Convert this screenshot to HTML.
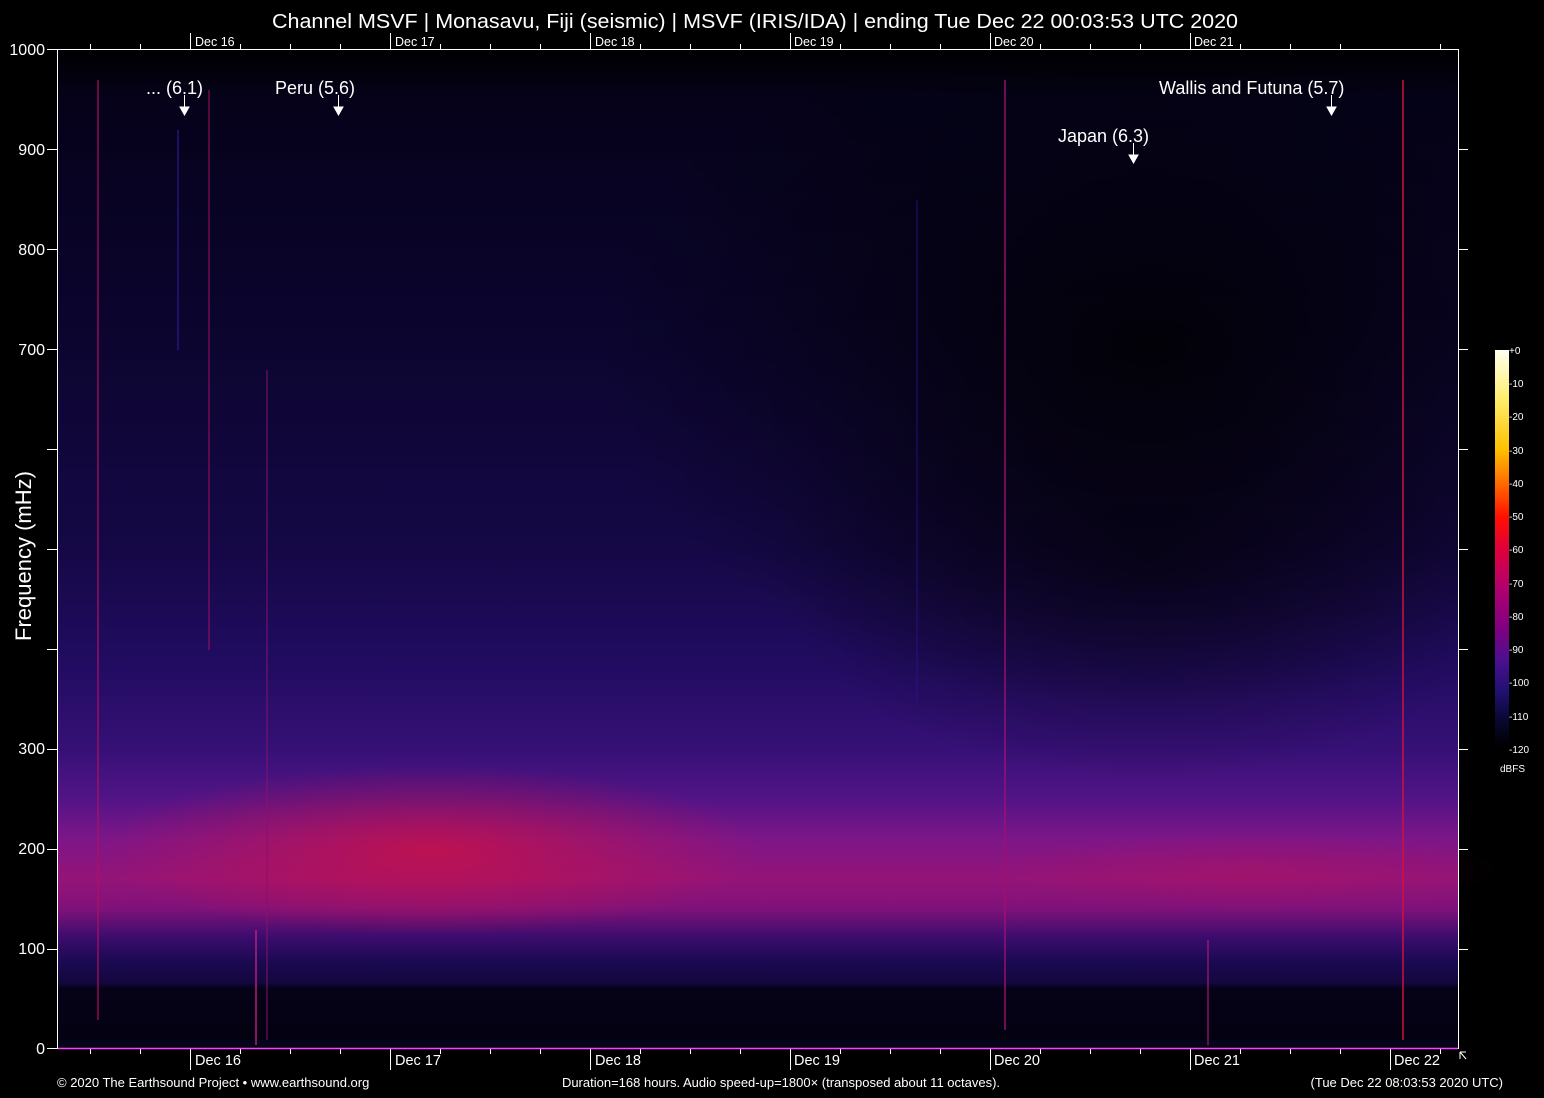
<!DOCTYPE html>
<html><head><meta charset="utf-8"><style>
html,body{margin:0;padding:0;background:#000;width:1544px;height:1098px;overflow:hidden}
text{font-family:"Liberation Sans",Arial,sans-serif;fill:#fff}
</style></head><body>
<svg width="1544" height="1098" xmlns="http://www.w3.org/2000/svg">
<defs>
<linearGradient id="v" x1="0" y1="0" x2="0" y2="1">
<stop offset="0" stop-color="#000"/>
<stop offset="0.05" stop-color="#05021a"/>
<stop offset="0.3" stop-color="#0c0530"/>
<stop offset="0.5" stop-color="#150846"/>
<stop offset="0.62" stop-color="#220c62"/>
<stop offset="0.7" stop-color="#361076"/>
<stop offset="0.75" stop-color="#521486"/>
<stop offset="0.79" stop-color="#7c1688"/>
<stop offset="0.83" stop-color="#941478"/>
<stop offset="0.86" stop-color="#80127a"/>
<stop offset="0.89" stop-color="#3a0c6c"/>
<stop offset="0.915" stop-color="#1a0950"/>
<stop offset="0.935" stop-color="#14083e"/>
<stop offset="0.94" stop-color="#060218"/>
<stop offset="1" stop-color="#030110"/>
</linearGradient>
<radialGradient id="red" cx="0.5" cy="0.5" r="0.5">
<stop offset="0" stop-color="#d01040" stop-opacity="0.75"/>
<stop offset="1" stop-color="#d01040" stop-opacity="0"/>
</radialGradient>
<radialGradient id="dark" cx="0.5" cy="0.5" r="0.5">
<stop offset="0" stop-color="#000" stop-opacity="0.85"/>
<stop offset="1" stop-color="#000" stop-opacity="0"/>
</radialGradient>
<linearGradient id="cb" x1="0" y1="0" x2="0" y2="1">
<stop offset="0" stop-color="#fffff0"/>
<stop offset="0.12" stop-color="#ffee70"/>
<stop offset="0.25" stop-color="#ffc000"/>
<stop offset="0.33" stop-color="#ff7000"/>
<stop offset="0.42" stop-color="#ff1000"/>
<stop offset="0.5" stop-color="#e0003a"/>
<stop offset="0.6" stop-color="#b00070"/>
<stop offset="0.7" stop-color="#800080"/>
<stop offset="0.78" stop-color="#4a1090"/>
<stop offset="0.86" stop-color="#201070"/>
<stop offset="0.93" stop-color="#080830"/>
<stop offset="1" stop-color="#000"/>
</linearGradient>
</defs>
<rect x="58" y="49" width="1400" height="999" fill="url(#v)"/>
<ellipse cx="1150" cy="350" rx="550" ry="360" fill="url(#dark)"/>
<ellipse cx="1150" cy="560" rx="380" ry="220" fill="url(#dark)" opacity="0.6"/>
<ellipse cx="430" cy="850" rx="330" ry="85" fill="url(#red)"/>
<ellipse cx="1250" cy="870" rx="250" ry="40" fill="url(#red)" opacity="0.3"/>
<rect x="58" y="1040" width="1400" height="8" fill="#06041a"/>
<g stroke-width="2">
<line x1="98" y1="80" x2="98" y2="1020" stroke="#b01060" opacity="0.6"/>
<line x1="209" y1="90" x2="209" y2="650" stroke="#a01060" opacity="0.5"/>
<line x1="178" y1="130" x2="178" y2="350" stroke="#3020a0" opacity="0.5"/>
<line x1="267" y1="370" x2="267" y2="1040" stroke="#8a1070" opacity="0.5"/>
<line x1="1005" y1="80" x2="1005" y2="1030" stroke="#a01070" opacity="0.7"/>
<line x1="1403" y1="80" x2="1403" y2="1040" stroke="#d01040" opacity="0.75"/>
<line x1="256" y1="930" x2="256" y2="1045" stroke="#c02080" opacity="0.7"/>
<line x1="1208" y1="940" x2="1208" y2="1045" stroke="#c02080" opacity="0.5"/>
<line x1="917" y1="200" x2="917" y2="700" stroke="#2a1490" opacity="0.4"/>
</g>
<g stroke="#fff" stroke-width="1" fill="none">
<line x1="57.5" y1="49" x2="57.5" y2="1049"/>
<line x1="1458.5" y1="49" x2="1458.5" y2="1049"/>
<line x1="57" y1="49.5" x2="1459" y2="49.5"/>
</g>
<line x1="58" y1="1048.5" x2="1458" y2="1048.5" stroke="#ff40ff" stroke-width="1.5"/>
<g stroke="#fff">
<path d="M47 49.5h10M47 149.5h10M47 249.5h10M47 349.5h10M47 449.5h10M47 549.5h10M47 649.5h10M47 749.5h10M47 849.5h10M47 949.5h10M47 1048.5h10"/>
<path d="M1458 149.5h10M1458 249.5h10M1458 349.5h10M1458 449.5h10M1458 549.5h10M1458 649.5h10M1458 749.5h10M1458 849.5h10M1458 949.5h10"/>
<path d="M90.5 1049v5M140.5 1049v5M240.5 1049v5M290.5 1049v5M340.5 1049v5M440.5 1049v5M490.5 1049v5M540.5 1049v5M640.5 1049v5M690.5 1049v5M740.5 1049v5M840.5 1049v5M890.5 1049v5M940.5 1049v5M1040.5 1049v5M1090.5 1049v5M1140.5 1049v5M1240.5 1049v5M1290.5 1049v5M1340.5 1049v5M1440.5 1049v5"/>
<path d="M190.5 1049v21M390.5 1049v21M590.5 1049v21M790.5 1049v21M990.5 1049v21M1190.5 1049v21M1390.5 1049v21"/>
<path d="M90.5 44v5M140.5 44v5M240.5 44v5M290.5 44v5M340.5 44v5M440.5 44v5M490.5 44v5M540.5 44v5M640.5 44v5M690.5 44v5M740.5 44v5M840.5 44v5M890.5 44v5M940.5 44v5M1040.5 44v5M1090.5 44v5M1140.5 44v5M1240.5 44v5M1290.5 44v5M1340.5 44v5M1440.5 44v5"/>
<path d="M190.5 33v16M390.5 33v16M590.5 33v16M790.5 33v16M990.5 33v16M1190.5 33v16"/>
</g>
<text x="755" y="28" font-size="20" text-anchor="middle" textLength="966" lengthAdjust="spacingAndGlyphs">Channel MSVF | Monasavu, Fiji (seismic) | MSVF (IRIS/IDA) | ending Tue Dec 22 00:03:53 UTC 2020</text>
<g font-size="12.5">
<text x="195" y="46">Dec 16</text><text x="395" y="46">Dec 17</text><text x="595" y="46">Dec 18</text><text x="794" y="46">Dec 19</text><text x="994" y="46">Dec 20</text><text x="1194" y="46">Dec 21</text>
</g>
<g font-size="14.5">
<text x="195" y="1065">Dec 16</text><text x="395" y="1065">Dec 17</text><text x="595" y="1065">Dec 18</text><text x="794" y="1065">Dec 19</text><text x="994" y="1065">Dec 20</text><text x="1194" y="1065">Dec 21</text><text x="1394" y="1065">Dec 22</text>
</g>
<g font-size="16" text-anchor="end">
<text x="45" y="55">1000</text><text x="45" y="155">900</text><text x="45" y="255">800</text><text x="45" y="355">700</text><text x="45" y="754">300</text><text x="45" y="854">200</text><text x="45" y="954">100</text><text x="45" y="1054">0</text>
</g>
<text transform="translate(31,556) rotate(-90)" font-size="22" text-anchor="middle">Frequency (mHz)</text>
<g font-size="18">
<text x="146" y="94">... (6.1)</text>
<text x="275" y="94">Peru (5.6)</text>
<text x="1159" y="94">Wallis and Futuna (5.7)</text>
<text x="1058" y="142">Japan (6.3)</text>
</g>
<g stroke="#fff" fill="#fff">
<path d="M184.5 95v12" /><path d="M180 107h9l-4.5 8z"/>
<path d="M338.5 95v12" /><path d="M334 107h9l-4.5 8z"/>
<path d="M1331.5 95v12" /><path d="M1327 107h9l-4.5 8z"/>
<path d="M1133.5 143v12" /><path d="M1129 155h9l-4.5 8z"/>
<path d="M1460 1052l6 7M1460 1052v7M1460 1052h6" fill="none"/>
</g>
<rect x="1495" y="350" width="14" height="398" fill="url(#cb)"/>
<g font-size="10" fill="#ccc">
<text x="1509" y="354">+0</text><text x="1509" y="387">-10</text><text x="1509" y="420">-20</text><text x="1509" y="454">-30</text><text x="1509" y="487">-40</text><text x="1509" y="520">-50</text><text x="1509" y="553">-60</text><text x="1509" y="587">-70</text><text x="1509" y="620">-80</text><text x="1509" y="653">-90</text><text x="1509" y="686">-100</text><text x="1509" y="720">-110</text><text x="1509" y="753">-120</text>
<text x="1500" y="772">dBFS</text>
</g>
<g font-size="13">
<text x="57" y="1087">© 2020 The Earthsound Project • www.earthsound.org</text>
<text x="781" y="1087" text-anchor="middle">Duration=168 hours. Audio speed-up=1800× (transposed about 11 octaves).</text>
<text x="1503" y="1087" text-anchor="end">(Tue Dec 22 08:03:53 2020 UTC)</text>
</g>
</svg>
</body></html>
